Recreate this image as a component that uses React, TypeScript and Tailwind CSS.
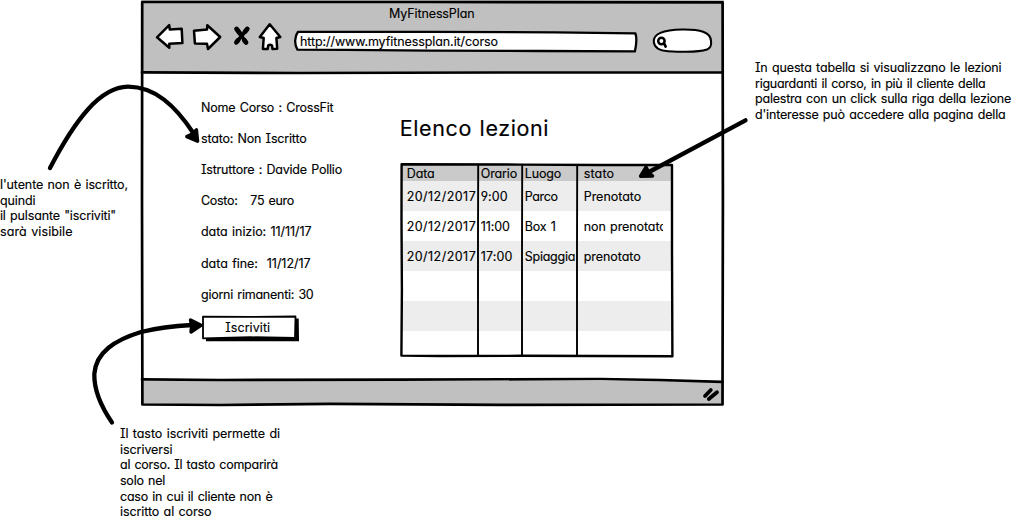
import { useLayoutEffect, useRef, useState } from "react";
import { clsx } from "clsx";

/** One line of text, tracked so that it fills the given width. */
function Line({ text, width, className }: { text: string; width: number; className?: string }) {
  const ref = useRef<HTMLSpanElement>(null);
  const [tracking, setTracking] = useState(0);
  useLayoutEffect(() => {
    if (!ref.current) return;
    const natural = ref.current.getBoundingClientRect().width;
    setTracking((width - natural) / text.length);
  }, [text, width]);
  return (
    <div className={clsx("whitespace-pre", className)}>
      <span ref={ref} style={{ letterSpacing: tracking + "px" }}>
        {text}
      </span>
    </div>
  );
}

type Row = [string, number];

function Note({ lines, className }: { lines: Row[]; className?: string }) {
  return (
    <div className={clsx("leading-[15.65px]", className)}>
      {lines.map(([text, width]) => (
        <Line key={text} text={text} width={width} />
      ))}
    </div>
  );
}

const leftNote: Row[] = [
  ["l'utente non è iscritto,", 128],
  ["quindi", 35.5],
  ['il pulsante "iscriviti"', 116],
  ["sarà visibile", 72.5],
];

const rightNote: Row[] = [
  ["In questa tabella si visualizzano le lezioni", 246.5],
  ["riguardanti il corso, in più il cliente della", 230.5],
  ["palestra con un click sulla riga della lezione", 256],
  ["d'interesse può accedere alla pagina della", 250.5],
];

const bottomNote: Row[] = [
  ["Il tasto iscriviti permette di", 160],
  ["iscriversi", 52.5],
  ["al corso. Il tasto comparirà", 158],
  ["solo nel", 45],
  ["caso in cui il cliente non è", 152.5],
  ["iscritto al corso", 91.5],
];

const details: Row[] = [
  ["Nome Corso : CrossFit", 132.5],
  ["stato: Non Iscritto", 105.5],
  ["Istruttore : Davide Pollio", 141],
  ["Costo:   75 euro", 93],
  ["data inizio: 11/11/17", 110.5],
  ["data fine:  11/12/17", 109.5],
  ["giorni rimanenti: 30", 112.5],
];

const header: Row[] = [["Data", 28], ["Orario", 36.5], ["Luogo", 36.5], ["stato", 30.5]];

const lessons: Row[][] = [
  [["20/12/2017", 69.5], ["9:00", 27], ["Parco", 33], ["Prenotato", 57.5]],
  [["20/12/2017", 69.5], ["11:00", 29], ["Box 1", 31], ["non prenotato", 83]],
  [["20/12/2017", 69.5], ["17:00", 32], ["Spiaggia", 50.5], ["prenotato", 57]],
  [],
  [],
  [],
];

const columns = "grid grid-cols-[74px_44px_59px_79px] mr-[2px] ml-px items-center pl-[5.7px]";

function LessonTable() {
  return (
    <div className="relative mt-[20px] flex h-[194px] w-[273px] flex-col pt-[2px]">
      <div className={clsx(columns, "h-4 shrink-0 bg-[#cacaca]")}>
        {header.map(([text, width]) => (
          <Line key={text} text={text} width={width} />
        ))}
      </div>
      {lessons.map((cells, i) => (
        <div
          key={i}
          className={clsx(columns, i === 5 ? "h-6" : "h-[30px] pt-[2px]", i % 2 === 0 ? "bg-[#ededed]" : "bg-white")}
        >
          {cells.map(([text, width], c) => (
            <Line key={c} text={text} width={width} className="overflow-hidden" />
          ))}
        </div>
      ))}
      <svg viewBox="400 163 273 194" className="absolute inset-0 h-full w-full overflow-visible" fill="none" stroke="#000" strokeLinejoin="round">
        <path d="M401.6 164.3 L520 164.6 L600 165 L672 165 L672 250 L672.4 356.2 L520 355.8 L440 356 L401.4 355.6 L401.9 290 L401.5 220Z" strokeWidth="2.4" />
        <path d="M478.2 165 L478 240 L478 355 M522.2 165 L522 260 L522 355 M577.2 165 L577 250 L577 355" strokeWidth="1.9" />
      </svg>
    </div>
  );
}

function Toolbar() {
  return (
    <div className="relative h-[73px] bg-[#c0c0c0]">
      <svg viewBox="141 0 583 73" className="absolute inset-0 h-full w-full" fill="#fff" stroke="#000" strokeWidth="2.5" strokeLinejoin="round" strokeLinecap="round">
        <path d="M157 37.3 L169.2 25.2 L169.8 29.5 L181.7 28.8 L182.4 43 L169.3 43.8 L169.3 47.8Z" />
        <path d="M194 30.7 L207 29.6 L207.3 25.3 L220.2 37 L208 49 L207 43.8 L194.9 43.4Z" />
        <path d="M269.7 24.2 L280.3 37 L276.4 38 L277.2 48.7 L272.5 49 L272 45.5 Q270 43.9 268.2 45.5 L267.7 49 L262.9 48.9 L263.7 38 L259.8 37Z" />
        <path d="M236.6 28.8 L246.3 42.7 M247.5 28.7 L236 42.8" strokeWidth="3.6" fill="none" />
        <path d="M236.6 29 L239.8 33.2 M244.3 40.2 L246 42.4 M247.2 29 L245 31.8 M236.6 42 L238 40.4" strokeWidth="4.8" fill="none" />
        <path d="M298 31.8 L430 31.8 L555 32.3 L635.4 33.3 C637.2 38.5 636.3 45 634.9 51.4 L540 51 L430 50.6 L345 49.8 L297.4 49.6 C294.2 44.5 294.5 36.5 298 31.8Z" strokeWidth="2.3" />
        <path d="M653.8 42 C652.8 34 663 29.8 682 29.5 C700 29.2 710.6 31.8 711 41 C711.7 46 710.5 48 707 49.6 C700 52 686 52.3 668 51.2 C659 50.6 654.4 48 653.8 42Z" strokeWidth="2.1" />
        <circle cx="661.4" cy="41" r="3.2" />
        <path d="M664.4 44 L665.6 46.5" strokeWidth="2.8" />
      </svg>
      <div className="relative flex h-full flex-col">
        <Line text="MyFitnessPlan" width={85.5} className="pt-[6px] pl-[248px] leading-4" />
        <Line text="http://www.myfitnessplan.it/corso" width={198} className="pt-[12px] pl-[159px] leading-4" />
      </div>
    </div>
  );
}

function SubscribeButton() {
  return (
    <button className="relative mt-[6px] ml-[1.2px] flex h-[25px] w-[98px] items-center pb-px pl-[23px]">
      <svg viewBox="202 316 98 25" className="absolute inset-0 h-full w-full overflow-visible" stroke="#000" strokeLinejoin="round">
        <path d="M206 339.5 L297.3 339.5 L297 318.5" fill="none" strokeWidth="3.4" strokeLinejoin="miter" />
        <path d="M203 316.6 L250 316.9 L295.5 316.5 L295 337.8 L250 337.2 L203 338.3Z" fill="#fff" strokeWidth="1.8" />
      </svg>
      <Line text="Iscriviti" width={45} className="relative" />
    </button>
  );
}

function BrowserWindow() {
  return (
    <div className="relative mt-px flex h-[405px] w-[583px] flex-col">
      <div className="-mt-px">
        <Toolbar />
      </div>
      <div className="flex h-[308px] bg-white">
        <div className="flex w-[259px] flex-col pt-[18.5px] pl-[60px]">
          {details.map(([text, width]) => (
            <Line key={text} text={text} width={width} className="leading-[31.2px]" />
          ))}
          <SubscribeButton />
        </div>
        <div className="flex flex-col pt-[40px]">
          <Line text="Elenco lezioni" width={149.5} className="-ml-[0.3px] h-[30px] text-[21.5px] leading-[30px]" />
          <LessonTable />
        </div>
      </div>
      <div className="h-[24px] bg-[#c0c0c0]" />
      <svg viewBox="141 1 583 405" className="pointer-events-none absolute inset-0 h-full w-full overflow-visible" fill="none" stroke="#000" strokeWidth="2.7" strokeLinejoin="round" strokeLinecap="round">
        <path d="M142.2 2 L430 2 L722.6 2.3 L722.9 200 L722.5 404.5 L500 404.8 L330 403.9 L220 405 L142.4 404.5 L142 200Z" />
        <path d="M142 72.4 L200 72.6 L300 73 L500 72.5 L722 72.5" />
        <path d="M142 379.4 L220 380 L400 379.6 L600 379 L660 380 L722 381.9" />
        <path d="M710.8 390 L705 396 M717 392.2 L708.8 399" strokeWidth="3.8" />
      </svg>
    </div>
  );
}

function Arrows() {
  return (
    <svg viewBox="0 0 1018 525" className="pointer-events-none absolute inset-0 h-full w-full" fill="none" stroke="#000" strokeWidth="4.3" strokeLinecap="round" strokeLinejoin="round">
      <path d="M50 168 C75 120 100 87 128 86.7 C155 87 175 105 194 134" />
      <path d="M112 422.5 C100 405 94 390 94.3 374 C96 352 115 340 141 332 C157 328 172 326 192 325" />
      <path d="M745.5 120.3 L648 172.5" />
      <g fill="#000" strokeWidth="3.4">
        <path d="M197.6 141.2 L186.8 136.6 Q192 134.5 196.4 129.8Z" />
        <path d="M201 325.3 L190.5 320 Q192.5 326 191 332Z" />
        <path d="M640.6 176.2 L646 167.2 Q648 172.5 652.6 176Z" />
      </g>
    </svg>
  );
}

export default function App() {
  return (
    <main className="relative flex h-[525px] w-[1018px] flex-col overflow-hidden bg-white font-['Inter','Liberation_Sans',sans-serif] text-[12.5px] text-black [-webkit-text-stroke:0.15px_#000] [font-feature-settings:'cv04','cv08','cv11'] [word-spacing:1px]">
      <div className="flex h-[406px] shrink-0">
        <Note lines={leftNote} className="w-[141px] shrink-0 pt-[177px]" />
        <BrowserWindow />
        <Note lines={rightNote} className="pt-[60px] pl-[31px]" />
      </div>
      <Note lines={bottomNote} className="pt-[20px] pl-[120px]" />
      <Arrows />
    </main>
  );
}
